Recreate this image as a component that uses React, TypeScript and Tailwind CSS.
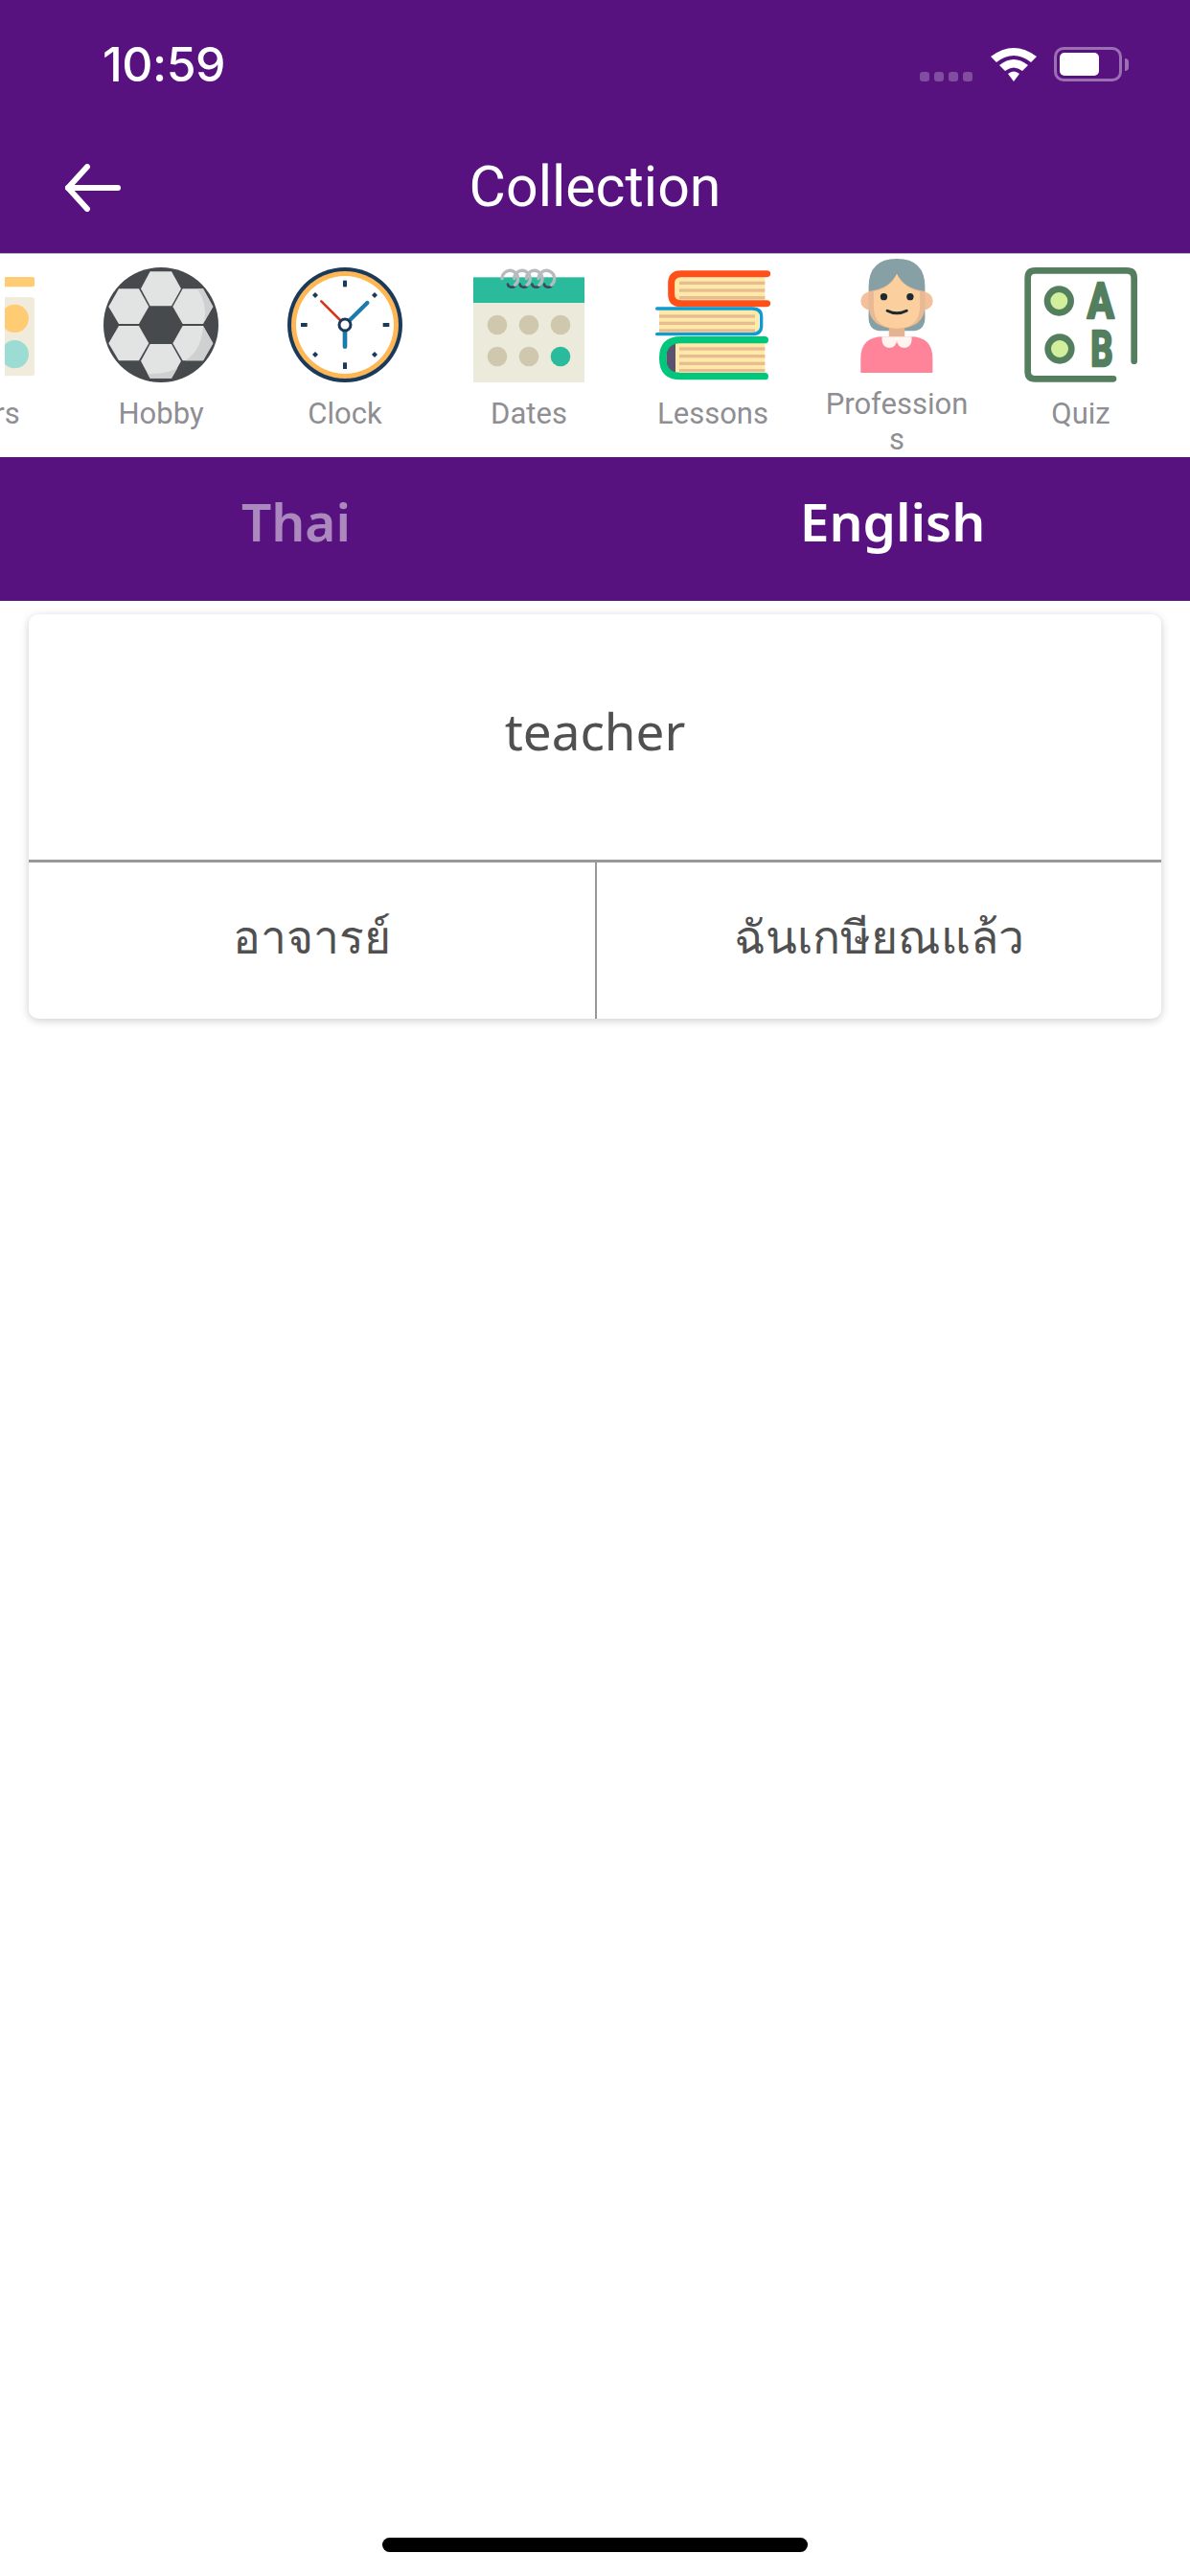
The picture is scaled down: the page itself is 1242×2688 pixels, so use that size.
import React from 'react';

function TrafficIcon() {
  return (
    <svg viewBox="-258 57 360 360" className="w-[120px] h-[120px]">
      <defs>
        <clipPath id="stripEdge">
          <rect x="9" y="57" width="120" height="360" />
        </clipPath>
      </defs>
      <g clipPath="url(#stripEdge)">
        <rect x="-100" y="87" width="208" height="31" rx="15" fill="#ffcc73" />
        <rect x="-100" y="150" width="208" height="247" rx="18" fill="#f1ebdc" />
        <circle cx="40" cy="217" r="44" fill="#ffcc73" />
        <circle cx="40" cy="329" r="44" fill="#9cdcd4" />
      </g>
    </svg>
  );
}

function BallIcon() {
  const hexes = [
    '441,124 470,70 537,70 567,124 537,178 470,178',
    '340,180 372,124 435,124 466,180 435,234 372,234',
    '541,180 572,124 636,124 667,180 636,234 572,234',
    '340,295 372,240 435,240 466,295 435,349 372,349',
    '541,295 572,240 636,240 667,295 636,349 572,349',
    '441,350 470,297 537,297 567,350 537,404 470,404',
  ];
  return (
    <svg viewBox="324 57 360 360" className="w-[120px] h-[120px]">
      <circle cx="504" cy="237" r="180" fill="#464a4d" />
      {hexes.map((p) => (
        <polygon key={p} points={p} fill="#e2e4e3" />
      ))}
      <path d="M618 124 H636 L667 180 L640 226 Q650 170 618 124Z" fill="#cfd0d0" />
      <path d="M636 240 L667 295 L636 349 H580 Q632 315 636 240Z" fill="#cfd0d0" />
      <path d="M470 404 H537 L556 372 Q520 392 462 390Z" fill="#cfd0d0" />
    </svg>
  );
}

function ClockIcon() {
  return (
    <svg viewBox="900 57 360 360" className="w-[120px] h-[120px]">
      <circle cx="1080" cy="237" r="180" fill="#1a3a5c" />
      <circle cx="1080" cy="237" r="168" fill="#fdb755" />
      <circle cx="1080" cy="237" r="153" fill="#fff" />
      <rect x="1074" y="98" width="12" height="20" fill="#1a3a5c" />
      <rect x="1074" y="355" width="12" height="20" fill="#1a3a5c" />
      <rect x="942" y="231" width="20" height="12" fill="#1a3a5c" />
      <rect x="1199" y="231" width="20" height="12" fill="#1a3a5c" />
      <polygon points="987,135 996,144 987,153 978,144" fill="#1a3a5c" />
      <polygon points="1173,135 1182,144 1173,153 1164,144" fill="#1a3a5c" />
      <polygon points="987,321 996,330 987,339 978,330" fill="#1a3a5c" />
      <polygon points="1173,321 1182,330 1173,339 1164,330" fill="#1a3a5c" />
      <path d="M1080 237 L1006 163" stroke="#d0391e" strokeWidth="8" strokeLinecap="round" />
      <path d="M1080 237 L1150 168" stroke="#1b7bab" strokeWidth="13" strokeLinecap="round" />
      <path d="M1080 237 V305" stroke="#1b7bab" strokeWidth="14" strokeLinecap="round" />
      <circle cx="1080" cy="237" r="18" fill="#fff" stroke="#1a3a5c" strokeWidth="9" />
    </svg>
  );
}

function CalendarIcon() {
  const rings = [338, 376, 414, 452];
  return (
    <svg viewBox="216 57 360 360" className="w-[120px] h-[120px]">
      <rect x="222" y="88" width="348" height="80" fill="#29bb9c" />
      <rect x="222" y="168" width="348" height="249" fill="#eceadb" />
      {[297, 396, 495].map((x) => (
        <circle key={x} cx={x} cy="237" r="31" fill="#cfc8ae" />
      ))}
      <circle cx="297" cy="336" r="31" fill="#cfc8ae" />
      <circle cx="396" cy="336" r="31" fill="#cfc8ae" />
      <circle cx="495" cy="336" r="31" fill="#29bb9c" />
      {rings.map((x) => (
        <g key={x} fill="none" strokeLinecap="round">
          <path d={`M${x - 8} 110 A13 11 0 0 0 ${x + 14} 116`} stroke="#41465a" strokeWidth="8" />
          <path d={`M${x + 14} 112 A25 25 0 1 0 ${x - 26} 92`} stroke="#b5bcc0" strokeWidth="10" />
        </g>
      ))}
    </svg>
  );
}

function BooksIcon() {
  return (
    <svg viewBox="792 57 360 360" className="w-[120px] h-[120px]">
      <rect x="850" y="88" width="285" height="72" fill="#ffe9a9" />
      {[106, 129, 152].map((y) => (
        <rect key={y} x="867" y={y - 5} width="268" height="10" fill="#e6bc90" />
      ))}
      <path d="M1142 77 H872 Q842 77 842 107 V140 Q842 170 872 170 H1142" fill="none" stroke="#ff5019" strokeWidth="21" strokeLinecap="round" strokeLinejoin="round" />
      <rect x="804" y="190" width="312" height="72" fill="#ffe9a9" />
      {[210, 232, 255].map((y) => (
        <rect key={y} x="804" y={y - 5} width="300" height="10" fill="#e6bc90" />
      ))}
      <path d="M797 186 H1095 Q1124 186 1124 212 V240 Q1124 266 1095 266 H797" fill="none" stroke="#0e9bd0" strokeWidth="10" strokeLinecap="round" />
      <rect x="826" y="296" width="40" height="90" fill="#5b5270" />
      <rect x="855" y="294" width="280" height="92" fill="#ffe9a9" />
      {[312, 335, 358, 380].map((y) => (
        <rect key={y} x="867" y={y - 5} width="268" height="10" fill="#e6bc90" />
      ))}
      <path d="M1135 284 H872 Q815 284 815 341 Q815 398 872 398 H1135" fill="none" stroke="#00c77b" strokeWidth="22" strokeLinecap="round" />
    </svg>
  );
}

function PersonIcon() {
  return (
    <svg viewBox="163 30 360 360" className="w-[120px] h-[120px]">
      <path d="M254 120 Q254 30 343 30 Q432 30 432 120 V215 Q432 258 390 258 H296 Q254 258 254 215Z" fill="#86a0a6" />
      <circle cx="257" cy="163" r="28" fill="#f4bf9b" />
      <circle cx="429" cy="163" r="28" fill="#f4bf9b" />
      <rect x="318" y="240" width="50" height="40" fill="#e3b48f" />
      <path d="M229 390 V345 Q229 276 300 276 H386 Q456 276 456 345 V390Z" fill="#ff8399" />
      <path d="M296 276 H343 V288 A23.500 23.500 0 0 1 296 288Z" fill="#fff4ef" />
      <path d="M343 276 H390 V288 A23.500 23.500 0 0 1 343 288Z" fill="#fff4ef" />
      <path d="M254 133 Q320 125 343 78 Q366 125 432 133 V175 Q432 250 343 250 Q254 250 254 175Z" fill="#e8b992" />
      <path d="M270 133 Q322 125 343 78 Q366 125 416 133 V180 Q416 250 343 250 Q270 250 270 180Z" fill="#fccf9f" />
      <circle cx="302" cy="150" r="11" fill="#1e2a30" />
      <circle cx="385" cy="150" r="11" fill="#1e2a30" />
      <path d="M313 194 Q343 210 374 194" fill="none" stroke="#1e2a30" strokeWidth="9" strokeLinecap="round" />
    </svg>
  );
}

function QuizIcon() {
  return (
    <svg viewBox="738 57 360 360" className="w-[120px] h-[120px]">
      <path d="M1085 350 V90 Q1085 67 1062 67 H775 Q752 67 752 90 V384 Q752 406 775 406 H1020" fill="none" stroke="#547f5f" strokeWidth="20" strokeLinecap="round" />
      <circle cx="850" cy="162" r="37" fill="#d2f09b" stroke="#547f5f" strokeWidth="20" />
      <circle cx="852" cy="312" r="37" fill="#d2f09b" stroke="#547f5f" strokeWidth="20" />
      <text x="980" y="216" textAnchor="middle" textLength={84} lengthAdjust="spacingAndGlyphs" fontFamily="Roboto, sans-serif" fontWeight="700" fontSize="154" fill="#547f5f" stroke="#547f5f" strokeWidth="8" strokeLinejoin="round">A</text>
      <text x="984" y="366" textAnchor="middle" textLength={70} lengthAdjust="spacingAndGlyphs" fontFamily="Roboto, sans-serif" fontWeight="700" fontSize="154" fill="#547f5f" stroke="#547f5f" strokeWidth="8" strokeLinejoin="round">B</text>
    </svg>
  );
}

const items = [
  { label: 'Colors', icon: <TrafficIcon /> },
  { label: 'Hobby', icon: <BallIcon /> },
  { label: 'Clock', icon: <ClockIcon /> },
  { label: 'Dates', icon: <CalendarIcon /> },
  { label: 'Lessons', icon: <BooksIcon /> },
  { label: 'Professions', icon: <PersonIcon />, raised: true },
  { label: 'Quiz', icon: <QuizIcon /> },
];

export default function App() {
  return (
    <div className="w-[1242px] min-h-[2688px] bg-white flex flex-col overflow-hidden font-['Roboto',sans-serif]">
      <div className="bg-[#57127f] h-[264px] flex flex-col">
        <div className="h-[124px] flex items-start justify-between pl-[107px] pr-[71px]">
          <span className="mt-[37px] text-[50px] leading-[60px] font-medium text-white font-['Inter',sans-serif] tracking-[-0.5px]">10:59</span>
          <div className="flex items-end mt-[49px]">
            <div className="flex gap-[5px] mr-[19px]">
              <span className="w-[10px] h-[10px] rounded-[3px] bg-white/25" />
              <span className="w-[10px] h-[10px] rounded-[3px] bg-white/25" />
              <span className="w-[10px] h-[10px] rounded-[3px] bg-white/25" />
              <span className="w-[10px] h-[10px] rounded-[3px] bg-white/25" />
            </div>
            <svg viewBox="0 0 48 36" className="w-[48px] h-[36px] mr-[18px]">
              <path d="M0 10 Q24 -8 48 10 L42 16 Q24 2 6 16Z" fill="#fff" />
              <path d="M9 19 Q24 7 39 19 L33 25 Q24 18 15 25Z" fill="#fff" />
              <path d="M18 28 Q24 23 30 28 L24 36Z" fill="#fff" />
            </svg>
            <div className="relative w-[71px] h-[36px] rounded-[10px] border-[3px] border-white/40 p-[3px]">
              <div className="w-[41px] h-full rounded-[5px] bg-white" />
              <span className="absolute right-[-10px] top-[9px] w-[4px] h-[13px] rounded-r-full bg-white/40" />
            </div>
          </div>
        </div>
        <div className="relative flex-1 flex justify-center pt-[37px]">
          <svg viewBox="0 0 60 50" className="absolute left-[66px] top-[47px] w-[60px] h-[50px]" fill="none" stroke="#fff" strokeWidth="6" strokeLinecap="round" strokeLinejoin="round">
            <path d="M5 25 H57" />
            <path d="M25 3 L5 25 L25 47" />
          </svg>
          <span className="text-[59px] leading-[68px] text-white">Collection</span>
        </div>
      </div>

      <div className="h-[213px] border-t border-[#b5b5b5] overflow-hidden flex -ml-[120px] w-[1364px] shrink-0">
        {items.map((it) => (
          <div key={it.label} className={`w-[192px] shrink-0 flex flex-col items-center ${it.raised ? 'pt-[5px]' : 'pt-[14px]'}`}>
            {it.icon}
            <span className={`mt-[14px] w-[160px] text-center text-[31px] leading-[37px] text-[#8e8e93] ${it.raised ? 'break-all' : ''}`}>{it.label}</span>
          </div>
        ))}
      </div>

      <div className="bg-[#57127f] h-[150px] grid grid-cols-2 font-['Noto_Sans',sans-serif] font-semibold text-[55px] leading-[70px]">
        <div className="flex items-center justify-center pr-[1px]">
          <span className="text-white/50 -ml-[2px] -mt-[16px]">Thai</span>
        </div>
        <div className="flex items-center justify-center">
          <span className="text-white -mt-[16px]">English</span>
        </div>
      </div>

      <div className="mx-[30px] mt-[14px] h-[422px] rounded-[10px] bg-white shadow-[0_2px_10px_rgba(0,0,0,0.2)] flex flex-col overflow-hidden font-['Noto_Sans',sans-serif] text-[#505050]">
        <div className="h-[259px] flex items-center justify-center border-b-[3px] border-[#999999]">
          <span className="text-[53px] leading-[70px] -mt-[12px]">teacher</span>
        </div>
        <div className="flex-1 grid grid-cols-[593px_1fr]">
          <div className="flex items-center justify-center border-r-2 border-[#999999] text-[48px] pb-[10px]">อาจารย์</div>
          <div className="flex items-center justify-center text-[48px] pb-[10px]">ฉันเกษียณแล้ว</div>
        </div>
      </div>

      <div className="mt-auto mb-[25px] mx-auto w-[444px] h-[15px] rounded-full bg-black" />
    </div>
  );
}
